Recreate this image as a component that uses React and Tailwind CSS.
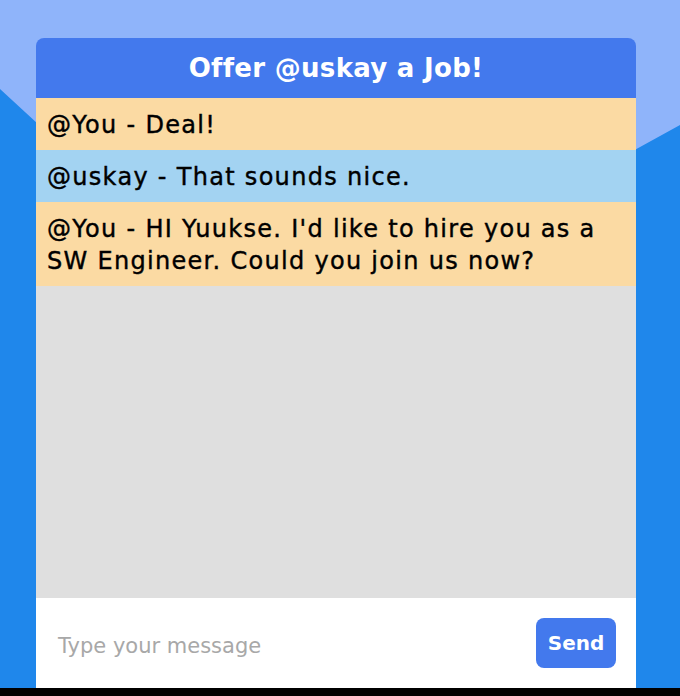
import React from "react";

export default function App() {
  const msgs = [
    { text: "@You - Deal!", bg: "bg-[#fbdaa3]" },
    { text: "@uskay - That sounds nice.", bg: "bg-[#a3d3f2]" },
    { text: "@You - HI Yuukse. I'd like to hire you as a SW Engineer. Could you join us now?", bg: "bg-[#fbdaa3]" },
  ];
  const font = { fontFamily: '"DejaVu Sans", sans-serif' };
  return (
    <div className="relative w-[680px] h-[696px] overflow-hidden bg-[#8fb4fa] flex flex-col">
      <svg className="absolute inset-0" width="680" height="696" viewBox="0 0 680 696">
        <polygon points="0,89 279,346 680,125 680,696 0,696" fill="#1f87eb" />
      </svg>
      <div className="relative flex-1 flex pl-[36px] pt-[38px]">
        <div className="w-[600px] flex flex-col rounded-t-[8px] overflow-hidden">
          <div className="h-[60px] bg-[#4379ed] flex items-center justify-center text-white text-[26px] tracking-[0.3px] font-bold" style={font}>
            Offer @uskay a Job!
          </div>
          <div className="flex-1 bg-[#dfdfdf] flex flex-col">
            {msgs.map((m, i) => (
              <div key={i} className={`${m.bg} px-[11px] pt-[11px] pb-[9px] text-[24px] tracking-[1.3px] leading-[32px] text-black [-webkit-text-stroke:0.4px_black]`} style={font}>
                {m.text}
              </div>
            ))}
          </div>
          <div className="h-[90px] bg-white flex items-center pl-[22px] pr-[20px]">
            <div className="flex-1 pt-[8px] text-[21px] text-[#a8a8a8]" style={font}>
              Type your message
            </div>
            <button className="w-[80px] h-[50px] rounded-[8px] bg-[#4379ed] text-white text-[20px] font-bold" style={font}>
              Send
            </button>
          </div>
        </div>
      </div>
      <div className="relative h-[8px] bg-black" />
    </div>
  );
}
